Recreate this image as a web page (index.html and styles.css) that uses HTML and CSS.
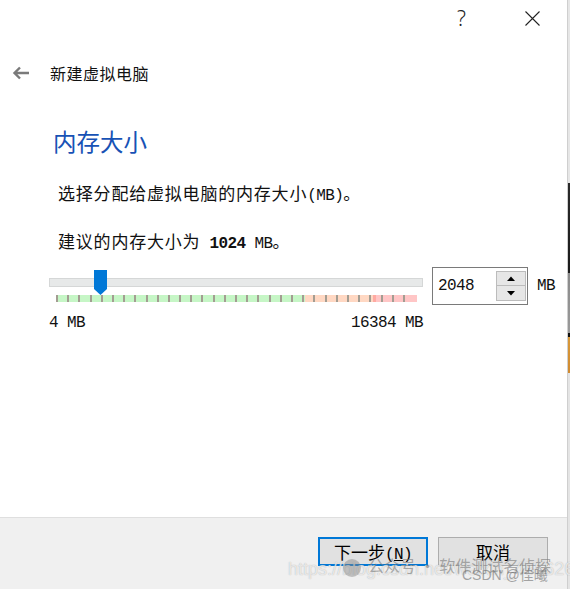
FILE: index.html
```html
<!DOCTYPE html>
<html lang="zh-CN">
<head>
<meta charset="utf-8">
<title>新建虚拟电脑</title>
<link rel="stylesheet" href="styles.css">
</head>
<body>
<div class="screen">
  <div class="dialog">
    <div class="titlebar">
      <span class="help">?</span>
      <svg class="close" width="15" height="15" viewBox="0 0 15 15"><path d="M0.5 0.5 L14.5 14.5 M14.5 0.5 L0.5 14.5" stroke="#222" stroke-width="1.1" fill="none"/></svg>
    </div>
    <div class="header">
      <svg class="back" width="18" height="14" viewBox="0 0 18 14"><path d="M17 7 H3 M8 1.5 L2.5 7 L8 12.5" stroke="#7a7a7a" stroke-width="2.4" fill="none"/></svg>
      <span class="title">新建虚拟电脑</span>
    </div>
    <div class="content">
      <h1 class="heading">内存大小</h1>
      <p class="line line1">选择分配给虚拟电脑的内存大小<span class="en">(MB)</span>。</p>
      <p class="line line2">建议的内存大小为<span class="en"> <b>1024</b> MB</span>。</p>
      <div class="slider-row">
        <div class="slider">
          <div class="track"></div>
          <svg class="ticks" width="361" height="7" viewBox="0 0 361 7">
            <rect x="0" y="0" width="249" height="7" fill="#c6f6c6"/>
            <rect x="249" y="0" width="68" height="7" fill="#ffd8c3"/>
            <rect x="317" y="0" width="3" height="7" fill="#ffaaa2"/>
            <rect x="320" y="0" width="41" height="7" fill="#ffc6c6"/>
            <g fill="#a39d92">
              <rect x="0" width="2" height="7"/><rect x="11" width="2" height="7"/><rect x="22" width="2" height="7"/><rect x="34" width="2" height="7"/>
              <rect x="45" width="2" height="7"/><rect x="56" width="2" height="7"/><rect x="67" width="2" height="7"/><rect x="78" width="2" height="7"/>
              <rect x="90" width="2" height="7"/><rect x="101" width="2" height="7"/><rect x="112" width="2" height="7"/><rect x="123" width="2" height="7"/>
              <rect x="134" width="2" height="7"/><rect x="145" width="2" height="7"/><rect x="157" width="2" height="7"/><rect x="168" width="2" height="7"/>
              <rect x="179" width="2" height="7"/><rect x="190" width="2" height="7"/><rect x="201" width="2" height="7"/><rect x="213" width="2" height="7"/>
              <rect x="224" width="2" height="7"/><rect x="235" width="2" height="7"/><rect x="246" width="2" height="7"/><rect x="257" width="2" height="7"/>
              <rect x="269" width="2" height="7"/><rect x="280" width="2" height="7"/><rect x="291" width="2" height="7"/><rect x="302" width="2" height="7"/>
              <rect x="313" width="2" height="7"/><rect x="325" width="2" height="7"/><rect x="336" width="2" height="7"/><rect x="347" width="2" height="7"/>
            </g>
          </svg>
          <svg class="thumb" width="13" height="25" viewBox="0 0 13 25"><path d="M0 0 H13 V19 L6.5 25 L0 19 Z" fill="#0078d7"/></svg>
        </div>
        <div class="spinbox">
          <span class="spin-value">2048</span>
          <div class="spin-buttons">
            <div class="spin-btn"><svg width="8" height="5" viewBox="0 0 8 5"><path d="M0 5 L4 0.5 L8 5 Z" fill="#000"/></svg></div>
            <div class="spin-btn"><svg width="8" height="5" viewBox="0 0 8 5"><path d="M0 0 L4 4.5 L8 0 Z" fill="#000"/></svg></div>
          </div>
        </div>
        <span class="unit en">MB</span>
      </div>
      <div class="range-labels en">
        <span>4 MB</span>
        <span>16384 MB</span>
      </div>
    </div>
    <div class="footer">
      <button class="btn btn-default">下一步<span class="en">(<u>N</u>)</span></button>
      <button class="btn">取消</button>
      <div class="watermark">
        <span class="wm-url">https://blog.csdn.net/weixin_4566269</span>
        <span class="wm-icon"></span>
        <span class="wm-pub">公众号 · 软件测试名侦探</span>
        <span class="wm-csdn">CSDN @佳曦</span>
      </div>
    </div>
  </div>
  <div class="edge"></div>
</div>
</body>
</html>
```
FILE: styles.css
```css
html, body {
  margin: 0;
  padding: 0;
  background: #ffffff;
}
body {
  font-family: "Noto Sans CJK SC", "Noto Sans", sans-serif;
  color: #000;
}
.screen {
  display: flex;
  width: 570px;
  height: 589px;
  overflow: hidden;
}
.dialog {
  width: 567px;
  height: 589px;
  flex: none;
  border-right: 1px solid #cfcfcf;
  display: flex;
  flex-direction: column;
  background: #fff;
}
.edge {
  width: 2px;
  flex: none;
  height: 589px;
  background: linear-gradient(to bottom,
    #e6e6e6 0, #e6e6e6 183px,
    #2a2a2a 183px, #1a1a1a 273px,
    #8a8a8a 273px, #9a9a9a 333px,
    #111 333px, #111 337px,
    #d8993a 337px, #d08a30 373px,
    #e4e4e4 373px, #e4e4e4 589px);
}
.titlebar {
  height: 37px;
  flex: none;
  display: flex;
  justify-content: flex-end;
  align-items: center;
  padding-right: 27px;
}
.help {
  font-family: "Noto Sans", sans-serif;
  font-weight: 300;
  font-size: 21px;
  line-height: 21px;
  color: #222;
}
.close {
  margin-left: 59px;
  display: block;
}
.header {
  margin-top: 19px;
  height: 34px;
  flex: none;
  display: flex;
  align-items: center;
  padding-left: 12px;
}
.back {
  display: block;
}
.title {
  margin-left: 20px;
  font-size: 16px;
  letter-spacing: 0.5px;
  line-height: 34px;
  color: #111;
}
.content {
  flex: 1;
}
.heading {
  margin: 36px 0 0 53px;
  height: 30px;
  font-size: 23.5px;
  line-height: 30px;
  font-weight: 400;
  color: #1752b5;
}
.line {
  margin: 0 0 0 58px;
  height: 30px;
  font-size: 17px;
  letter-spacing: 0.8px;
  line-height: 30px;
  color: #111;
}
.line1 {
  margin-top: 22px;
}
.line2 {
  margin-top: 18px;
}
.en {
  font-family: "Liberation Mono", "Noto Sans CJK SC", monospace;
  font-size: 16px;
  letter-spacing: -0.6px;
}
.line .en b {
  font-weight: 700;
}
.slider-row {
  margin-top: 10px;
  margin-left: 49px;
  height: 40px;
  display: flex;
  align-items: flex-start;
}
.slider {
  position: relative;
  width: 374px;
  height: 40px;
}
.track {
  margin-top: 12px;
  height: 7px;
  background: #e7e9e9;
  border: 1px solid #d5d7d7;
}
.ticks {
  display: block;
  margin-top: 8px;
  margin-left: 7px;
}
.thumb {
  position: absolute;
  left: 45px;
  top: 4px;
  display: block;
}
.spinbox {
  margin-top: 1px;
  margin-left: 9px;
  width: 96px;
  height: 38px;
  box-sizing: border-box;
  border: 1px solid #7a7a7a;
  display: flex;
  align-items: center;
  background: #fff;
}
.spin-value {
  flex: 1;
  padding-left: 5px;
  font-family: "Liberation Mono", monospace;
  font-size: 16px;
  letter-spacing: -0.6px;
  color: #111;
}
.spin-buttons {
  width: 30px;
  margin-right: 1px;
  display: flex;
  flex-direction: column;
}
.spin-btn {
  height: 15px;
  box-sizing: border-box;
  background: #e6e6e6;
  border: 1px solid #bcbcbc;
  display: flex;
  align-items: center;
  justify-content: center;
}
.spin-btn + .spin-btn {
  border-top: none;
}
.unit {
  margin-left: 9px;
  line-height: 40px;
  color: #111;
}
.range-labels {
  margin-top: 8px;
  margin-left: 49px;
  width: 374px;
  height: 18px;
  line-height: 18px;
  display: flex;
  justify-content: space-between;
  color: #111;
}
.footer {
  position: relative;
  flex: none;
  height: 72px;
  box-sizing: border-box;
  border-top: 1px solid #dfdfdf;
  background: #f0f0f0;
  display: flex;
  justify-content: flex-end;
  align-items: flex-start;
  padding-top: 19px;
  padding-right: 19px;
  gap: 10px;
}
.btn {
  width: 110px;
  height: 29px;
  box-sizing: border-box;
  background: #e1e1e1;
  border: 1px solid #adadad;
  font-family: "Noto Sans CJK SC", sans-serif;
  font-size: 17px;
  line-height: 25px;
  padding: 0;
  color: #000;
}
.btn .en {
  font-size: 16px;
}
.btn-default {
  border: 2px solid #0078d7;
}
.watermark {
  position: absolute;
  left: 0;
  top: 0;
  width: 567px;
  height: 71px;
  pointer-events: none;
}
.wm-url {
  position: absolute;
  left: 288px;
  top: 40px;
  font-family: "Liberation Sans", sans-serif;
  font-size: 18px;
  line-height: 22px;
  color: rgba(255, 255, 255, 0.7);
  text-shadow: 0 0 1px rgba(120, 120, 120, 0.6);
  white-space: nowrap;
}
.wm-icon {
  position: absolute;
  left: 343px;
  top: 41px;
  width: 18px;
  height: 18px;
  border-radius: 50%;
  background: rgba(130, 130, 130, 0.45);
}
.wm-pub {
  position: absolute;
  left: 368px;
  top: 36px;
  font-size: 16px;
  line-height: 22px;
  color: rgba(120, 120, 120, 0.6);
  white-space: nowrap;
}
.wm-csdn {
  position: absolute;
  left: 462px;
  top: 49px;
  font-family: "Liberation Sans", "Noto Sans CJK SC", sans-serif;
  font-size: 14px;
  line-height: 16px;
  color: rgba(110, 110, 110, 0.6);
  white-space: nowrap;
}
```
